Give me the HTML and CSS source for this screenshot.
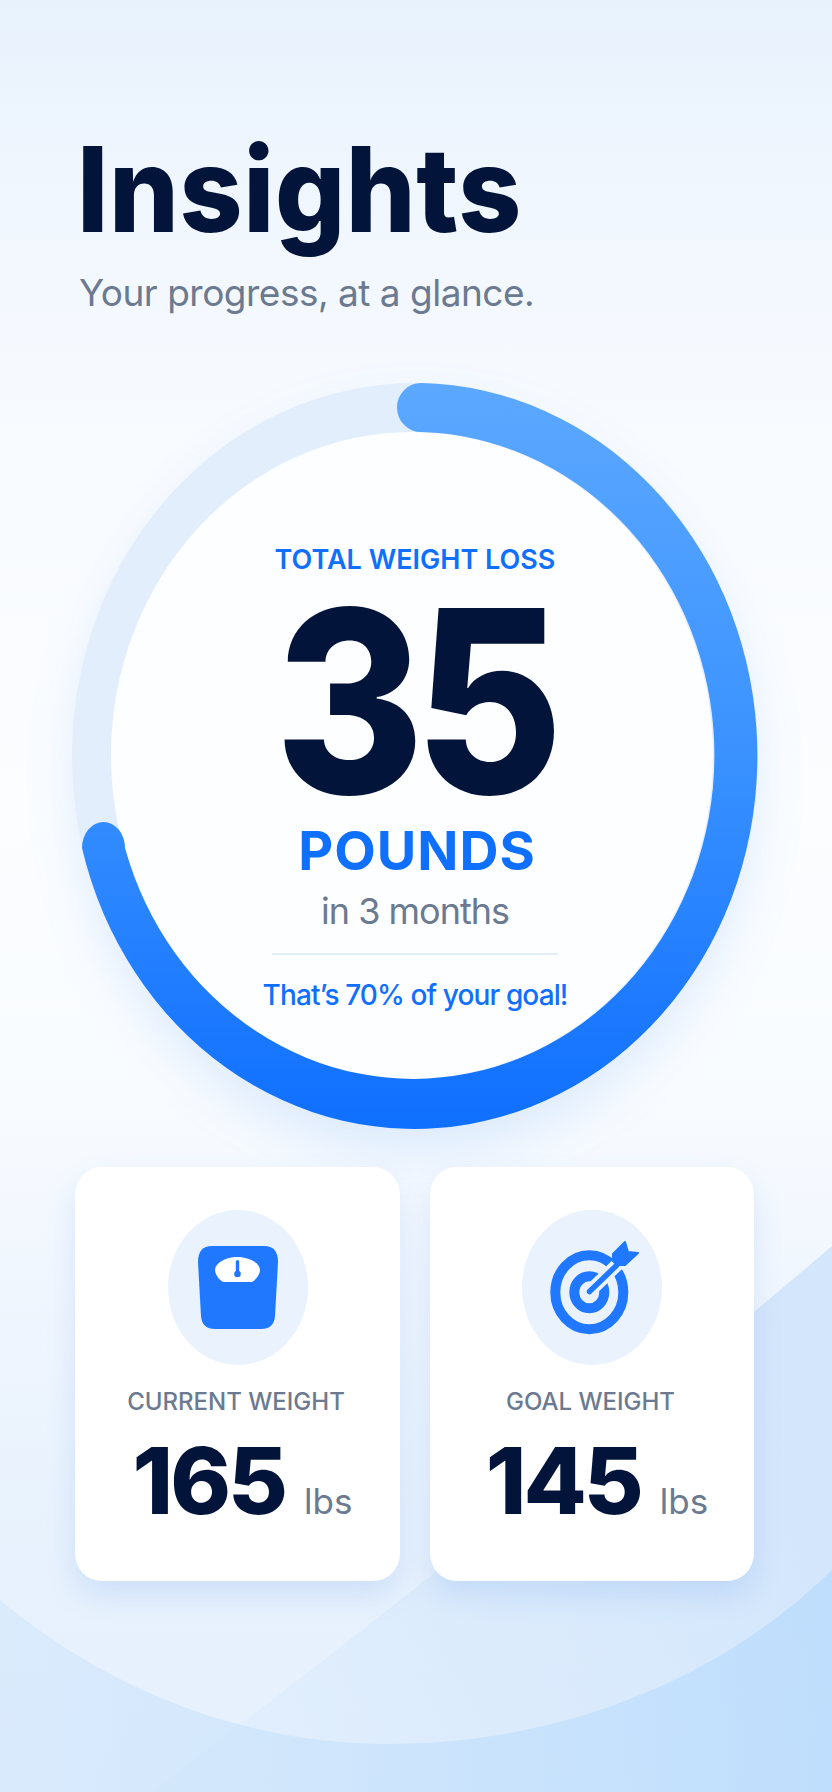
FILE: index.html
```html
<!DOCTYPE html>
<html lang="en">

<head>
  <meta charset="UTF-8">
  <meta name="viewport" content="width=device-width, initial-scale=1.0">
  <title>Insights</title>
  <link rel="stylesheet" href="styles.css">
</head>

<body>
  <div id="page">

    <!-- background curves -->
    <svg id="backdrop" viewBox="0 0 832 1792" aria-hidden="true">
      <defs>
        <linearGradient id="sweep" x1="150" y1="1750" x2="832" y2="1350" gradientUnits="userSpaceOnUse">
          <stop offset="0" stop-color="#cfe5fc" stop-opacity="0.2" />
          <stop offset="1" stop-color="#bcd9f9" stop-opacity="0.55" />
        </linearGradient>
        <linearGradient id="bowl" x1="0" y1="1700" x2="832" y2="1750" gradientUnits="userSpaceOnUse">
          <stop offset="0" stop-color="#cfe5fb" stop-opacity="0.55" />
          <stop offset="1" stop-color="#b5dafd" stop-opacity="0.7" />
        </linearGradient>
      </defs>
      <path d="M151 1792Q480 1545 832 1246V1792Z" fill="url(#sweep)" />
      <path d="M0 1600C120 1700 260 1744 387 1744C560 1744 720 1680 832 1570V1792H0Z" fill="url(#bowl)" />
    </svg>

    <header id="top">
      <h1 class="title">Insights</h1>
      <p class="subtitle">Your progress, at a glance.</p>
    </header>

    <section id="ring">
      <svg id="ring-art" viewBox="72 383 686 746" aria-hidden="true">
        <defs>
          <linearGradient id="arc" x1="0" y1="383" x2="0" y2="1129" gradientUnits="userSpaceOnUse">
            <stop offset="0" stop-color="#5ca8ff" />
            <stop offset="0.5" stop-color="#3a92ff" />
            <stop offset="1" stop-color="#0f6fff" />
          </linearGradient>
        </defs>
        <path class="ring-track" fill-rule="evenodd"
          d="M72 756A343 373 0 1 1 758 756A343 373 0 1 1 72 756ZM111 755.5A301 323.5 0 1 0 713 755.5A301 323.5 0 1 0 111 755.5Z" />
        <ellipse class="ring-inner" cx="412" cy="755.5" rx="301" ry="323.5" />
        <path fill="url(#arc)"
          d="M421 383A343 373 0 1 1 82 848A21.5 26 0 0 1 125 848A301 323.5 0 1 0 421 432A24 24.5 0 0 1 421 383Z" />
      </svg>

      <div class="ring-text">
        <span class="loss-label">TOTAL WEIGHT LOSS</span>
        <span class="loss-value">35</span>
        <span class="loss-unit">POUNDS</span>
        <span class="loss-time">in 3 months</span>
        <hr class="loss-rule">
        <span class="loss-note">That’s 70% of your goal!</span>
      </div>
    </section>

    <section id="cards">
      <div class="card">
        <div class="card-icon">
          <svg class="scale-icon" viewBox="0 0 80 84">
            <path fill="#1f78ff" d="M14 0H66Q80 0 80 16L77 70Q76 83 63 83H17Q4 83 3 70L0 16Q0 0 14 0Z" />
            <path fill="#fff" d="M17 24C17 17 28 11 39.5 11C51 11 62 17 62 24C62 28 58 34 54 36H25C21 34 17 28 17 24Z" />
            <rect fill="#1f78ff" x="37.8" y="14" width="3.4" height="14" rx="1.7" />
            <circle fill="#1f78ff" cx="39.5" cy="28" r="3.3" />
          </svg>
        </div>
        <span class="card-label">CURRENT WEIGHT</span>
        <div class="card-value">165<span class="card-unit">lbs</span></div>
      </div>

      <div class="card">
        <div class="card-icon">
          <svg class="target-icon" viewBox="0 0 92 100">
            <ellipse cx="39.3" cy="54.3" rx="34" ry="37" fill="none" stroke="#1f78ff" stroke-width="10" />
            <ellipse cx="39.3" cy="54.3" rx="15" ry="16" fill="none" stroke="#1f78ff" stroke-width="10" />
            <line x1="42" y1="51" x2="72" y2="22" stroke="#e9f2fd" stroke-width="13" />
            <line x1="39.5" y1="53.5" x2="67" y2="27" stroke="#1f78ff" stroke-width="5.5" stroke-linecap="round" />
            <path fill="#1f78ff" stroke="#1f78ff" stroke-width="2" stroke-linejoin="round"
              d="M63 16L75 4L78 14L88 15L75 27H67L63 23Z" />
          </svg>
        </div>
        <span class="card-label">GOAL WEIGHT</span>
        <div class="card-value">145<span class="card-unit">lbs</span></div>
      </div>
    </section>

  </div>
</body>

</html>
```

FILE: styles.css
```css
:root {
  --navy: #02143a;
  --blue: #0f6fff;
  --grey: #6b7a90;
  --icon-bg: #e9f2fd;
  --font-family: "Inter", "Liberation Sans", sans-serif;
}

html,
body {
  width: 832px;
  height: 1792px;
  margin: 0px;
  padding: 0px;
  overflow: hidden;
  font-family: var(--font-family);
}

#page {
  position: relative;
  width: 832px;
  height: 1792px;
  display: flex;
  flex-direction: column;
  overflow: hidden;
  background: linear-gradient(180deg, #e8f2fd 0%, #f1f7fe 12%, #f8fbff 25%, #fbfdff 45%, #f9fcff 60%, #f0f6fe 72%, #e8f2fd 85%, #e6f1fd 100%);
}

#backdrop {
  position: absolute;
  top: 0;
  left: 0;
  width: 832px;
  height: 1792px;
}

/* header */
#top {
  position: relative;
  padding: 131px 0 0 79px;
}

.title {
  margin: 0 0 0 -2px;
  font-size: 110px;
  line-height: 117px;
  font-weight: 800;
  letter-spacing: 0.6px;
  color: var(--navy);
  transform: scaleY(1.07);
}

.subtitle {
  margin: 22px 0 0 0;
  font-size: 37px;
  line-height: 46px;
  font-weight: 400;
  color: var(--grey);
  letter-spacing: -0.5px;
}

/* progress ring */
#ring {
  position: relative;
  width: 686px;
  height: 746px;
  margin: 67px 0 0 72px;
}

#ring-art {
  position: absolute;
  top: 0;
  left: 0;
  width: 686px;
  height: 746px;
  overflow: visible;
  filter: drop-shadow(0 24px 24px rgba(40, 120, 240, 0.12));
}

.ring-track {
  fill: #e2eefb;
}

.ring-inner {
  fill: #fdfeff;
}

.ring-text {
  position: relative;
  display: flex;
  flex-direction: column;
  align-items: center;
  padding-top: 161px;
}

.loss-label {
  font-size: 27px;
  line-height: 32px;
  font-weight: 600;
  color: var(--blue);
}

.loss-value {
  margin-top: 25px;
  padding-right: 2px;
  font-size: 228px;
  line-height: 200px;
  font-weight: 800;
  letter-spacing: -10px;
  color: var(--navy);
  transform: scaleY(1.12);
}

.loss-unit {
  margin: 20px 0 0 4px;
  font-size: 54px;
  line-height: 60px;
  font-weight: 700;
  letter-spacing: 1px;
  color: var(--blue);
}

.loss-time {
  margin-top: 8px;
  font-size: 36px;
  line-height: 44px;
  font-weight: 400;
  letter-spacing: -1px;
  color: var(--grey);
}

.loss-rule {
  width: 286px;
  height: 2px;
  margin: 20px 0 0 0;
  border: 0;
  background-color: #e3edf9;
}

.loss-note {
  margin-top: 23px;
  font-size: 28px;
  line-height: 34px;
  font-weight: 500;
  letter-spacing: -0.9px;
  color: var(--blue);
}

/* stat cards */
#cards {
  position: relative;
  display: grid;
  grid-template-columns: 325px 324px;
  gap: 30px;
  margin: 38px 0 0 75px;
}

.card {
  height: 414px;
  box-sizing: border-box;
  padding-top: 43px;
  display: flex;
  flex-direction: column;
  align-items: center;
  background-color: #fff;
  border-radius: 26px / 28px;
  box-shadow: 0 14px 30px rgba(60, 130, 220, 0.15);
}

.card-icon {
  width: 140px;
  height: 155px;
  flex-shrink: 0;
  display: flex;
  align-items: center;
  justify-content: center;
  border-radius: 50%;
  background-color: var(--icon-bg);
}

.scale-icon {
  width: 80px;
  height: 84px;
}

.target-icon {
  width: 92px;
  height: 100px;
  margin-left: 8px;
}

.card-label {
  margin-top: 22px;
  padding-right: 3px;
  font-size: 24px;
  line-height: 30px;
  font-weight: 500;
  color: var(--grey);
}

.card-value {
  margin-top: 14px;
  padding-left: 10px;
  font-size: 92px;
  line-height: 100px;
  font-weight: 800;
  letter-spacing: -3px;
  color: var(--navy);
  display: flex;
  align-items: baseline;
  gap: 19px;
}

.card-unit {
  font-size: 35px;
  font-weight: 400;
  letter-spacing: 0;
  color: var(--grey);
}
```
